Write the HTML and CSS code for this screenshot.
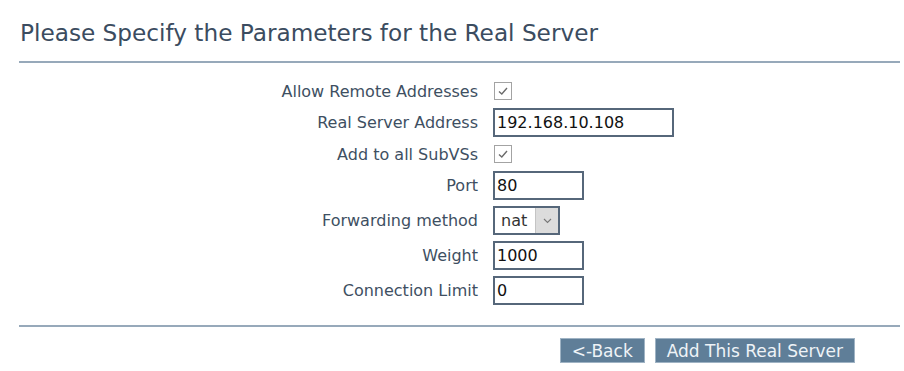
FILE: index.html
```html
<!DOCTYPE html>
<html lang="en">
<head>
  <meta charset="UTF-8" />
  <title>Add Real Server</title>
  <link rel="stylesheet" href="styles.css">
</head>
<body>
  <h2 class="title">Please Specify the Parameters for the Real Server</h2>
  <hr class="rule">

  <form class="params">
    <label class="lbl">Allow Remote Addresses</label>
    <div class="field">
      <span class="check"><svg width="12" height="12" viewBox="0 0 12 12"><path d="M2 6.5 L4.8 9 L10 3" fill="none" stroke="#6b6b6b" stroke-width="1.4"/></svg></span>
    </div>

    <label class="lbl">Real Server Address</label>
    <div class="field"><input class="txt wide" type="text" value="192.168.10.108"></div>

    <label class="lbl">Add to all SubVSs</label>
    <div class="field">
      <span class="check"><svg width="12" height="12" viewBox="0 0 12 12"><path d="M2 6.5 L4.8 9 L10 3" fill="none" stroke="#6b6b6b" stroke-width="1.4"/></svg></span>
    </div>

    <label class="lbl">Port</label>
    <div class="field"><input class="txt" type="text" value="80"></div>

    <label class="lbl">Forwarding method</label>
    <div class="field">
      <div class="select">
        <span class="sel-val">nat</span>
        <span class="sel-btn"><svg width="9" height="6" viewBox="0 0 9 6"><path d="M1 1 L4.5 4.5 L8 1" fill="none" stroke="#777" stroke-width="1.1"/></svg></span>
      </div>
    </div>

    <label class="lbl">Weight</label>
    <div class="field"><input class="txt" type="text" value="1000"></div>

    <label class="lbl">Connection Limit</label>
    <div class="field"><input class="txt" type="text" value="0"></div>
  </form>

  <hr class="rule bottom">

  <div class="actions">
    <button class="btn" type="button">&lt;-Back</button>
    <button class="btn" type="button">Add This Real Server</button>
  </div>
</body>
</html>
```

FILE: styles.css
```css
body {
  margin: 0;
  font-family: "DejaVu Sans", Verdana, sans-serif;
  color: #3b4c5e;
  background: #fff;
}
.title {
  margin: 19px 0 0 20px;
  font-size: 23.2px;
  font-weight: normal;
  line-height: 28px;
  color: #3b4c60;
}
.rule {
  margin: 14px 4px 0 19px;
  border: none;
  height: 2px;
  background: #97a9ba;
}
.rule.bottom {
  margin-top: 20px;
}
.params {
  display: grid;
  grid-template-columns: 478px auto;
  column-gap: 15px;
  row-gap: 6px;
  margin-top: 17px;
}
.lbl {
  text-align: right;
  font-size: 16px;
  align-self: center;
  color: #3e4f62;
}
.field {
  display: flex;
  align-items: center;
  min-height: 22px;
}
.check {
  width: 16px;
  height: 16px;
  border: 1px solid #a3a3a3;
  background: #fff;
  display: flex;
  align-items: center;
  justify-content: center;
  margin-left: 1px;
}
.txt {
  box-sizing: border-box;
  width: 91px;
  height: 29px;
  border: 2px solid #56677a;
  padding: 0 2px;
  font-family: "DejaVu Sans", Verdana, sans-serif;
  font-size: 16px;
  color: #111;
  outline: none;
}
.txt.wide {
  width: 181px;
}
.select {
  box-sizing: border-box;
  display: flex;
  width: 67px;
  height: 29px;
  border: 2px solid #56677a;
}
.sel-val {
  flex: 1;
  padding-left: 6px;
  font-size: 16px;
  line-height: 25px;
  color: #333;
}
.sel-btn {
  width: 22px;
  background: #dcdcdc;
  border-left: 1px solid #c4c4c4;
  display: flex;
  align-items: center;
  justify-content: center;
}
.actions {
  display: flex;
  justify-content: flex-end;
  gap: 10px;
  margin: 11px 49px 0 0;
}
.btn {
  height: 25px;
  padding: 0 11px;
  background: #5f7e98;
  border: 1px solid #9fb3c4;
  color: #eef3f7;
  font-family: "DejaVu Sans", Verdana, sans-serif;
  font-size: 17px;
  line-height: 22px;
  cursor: pointer;
}
```
